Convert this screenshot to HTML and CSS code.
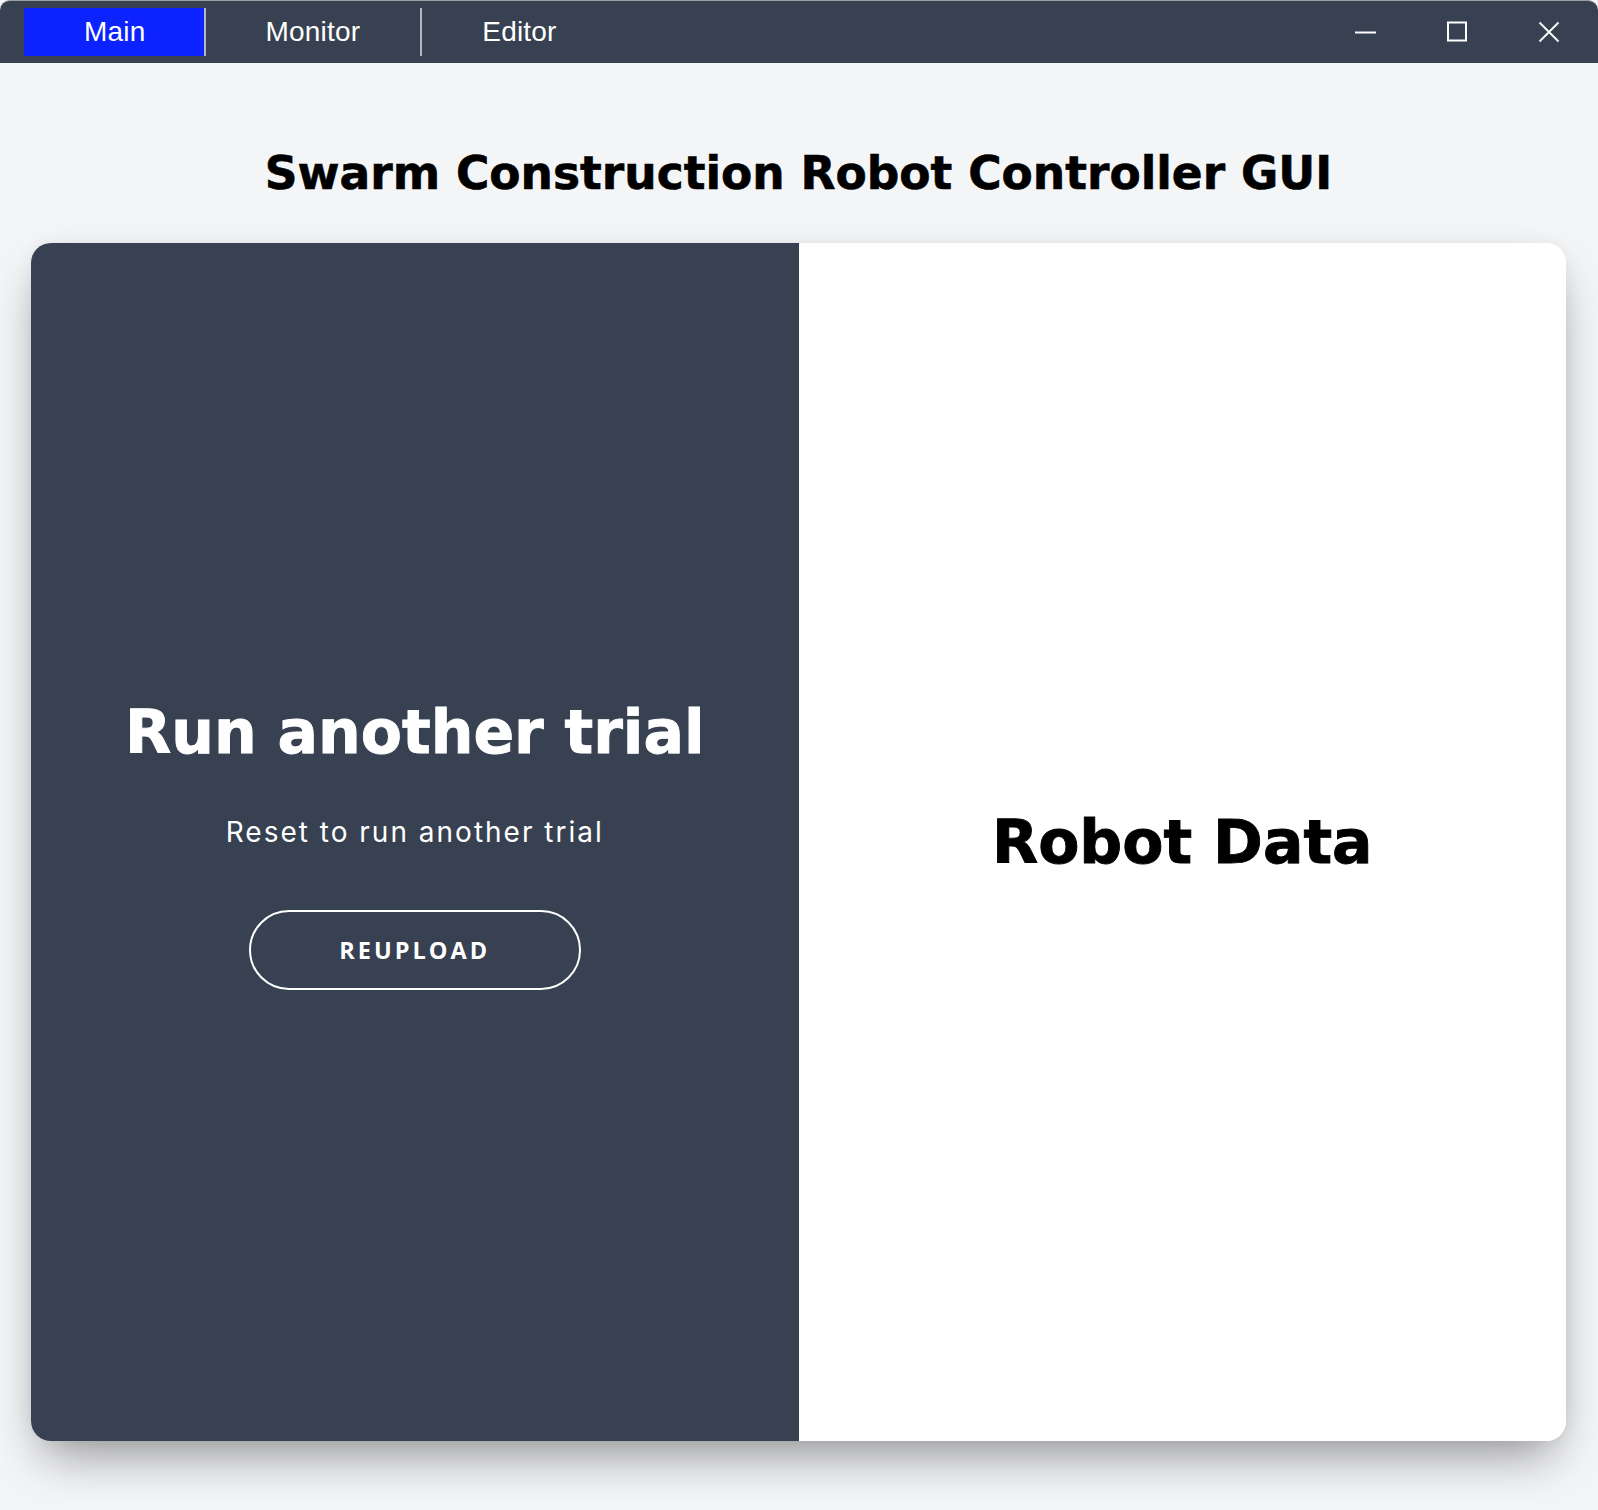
FILE: index.html
```html
<!DOCTYPE html>
<html lang="en">
<head>
<meta charset="utf-8">
<title>Swarm Construction Robot Controller GUI</title>
<link rel="stylesheet" href="styles.css">
</head>
<body>
<div class="window">
  <header class="titlebar">
    <nav class="tabs">
      <div class="tab tab-active">Main</div>
      <div class="tab tab-divided">Monitor</div>
      <div class="tab">Editor</div>
    </nav>
    <div class="controls">
      <div class="control">
        <svg width="22" height="22" viewBox="0 0 22 22"><path d="M1 11.5H22" stroke="#fff" stroke-width="2" fill="none"/></svg>
      </div>
      <div class="control">
        <svg width="22" height="22" viewBox="0 0 22 22"><rect x="2" y="1.5" width="18" height="18" stroke="#fff" stroke-width="2" fill="none"/></svg>
      </div>
      <div class="control">
        <svg width="22" height="22" viewBox="0 0 22 22"><path d="M1.5 1.5L20.5 20.5M20.5 1.5L1.5 20.5" stroke="#fff" stroke-width="1.8" fill="none"/></svg>
      </div>
    </div>
  </header>
  <main class="content">
    <h1 class="page-title">Swarm Construction Robot Controller GUI</h1>
    <section class="card">
      <div class="panel panel-dark">
        <h2 class="panel-heading">Run another trial</h2>
        <p class="panel-sub">Reset to run another trial</p>
        <button class="outline-btn">REUPLOAD</button>
      </div>
      <div class="panel panel-light">
        <h2 class="panel-heading panel-heading-dark">Robot Data</h2>
      </div>
    </section>
  </main>
</div>
</body>
</html>
```

FILE: styles.css
```css
* { box-sizing: border-box; }
html, body {
  margin: 0;
  padding: 0;
  background: #f4f5f7;
}
body {
  width: 1598px;
  height: 1510px;
  overflow: hidden;
  font-family: "Inter", "Liberation Sans", sans-serif;
}
.window {
  display: flex;
  flex-direction: column;
  height: 100%;
}
.titlebar {
  height: 63px;
  background: #374151;
  border-top: 1px solid #9a9ea5;
  border-radius: 10px 10px 0 0;
  display: flex;
  justify-content: space-between;
  align-items: stretch;
  flex-shrink: 0;
}
.tabs {
  display: flex;
  align-items: center;
  padding-left: 24px;
}
.tab {
  height: 48px;
  display: flex;
  align-items: center;
  padding: 0 60px;
  font-family: "Liberation Sans", Arial, sans-serif;
  font-size: 28px;
  color: #ffffff;
  letter-spacing: 0.2px;
}
.tab-active {
  background: #0c22ff;
  border-right: 2px solid #b4b7bc;
  padding: 0 58px 0 60px;
}
.tab-divided {
  border-right: 2px solid #b4b7bc;
}
.controls {
  display: flex;
  padding-right: 3px;
}
.control {
  width: 92px;
  display: flex;
  align-items: center;
  justify-content: center;
  padding-bottom: 1px;
}
.content {
  flex: 1;
  display: flex;
  flex-direction: column;
  padding: 82px 32px 0 31px;
}
.page-title {
  margin: 0 0 40px;
  text-align: center;
  font-family: "DejaVu Sans", "Inter", sans-serif;
  font-size: 45.5px;
  line-height: 58px;
  font-weight: 700;
  color: #000;
  -webkit-text-stroke: 0.6px #000;
}
.card {
  height: 1198px;
  display: grid;
  grid-template-columns: 1fr 1fr;
  border-radius: 20px;
  overflow: hidden;
  box-shadow: 0 25px 50px -12px rgba(0, 0, 0, 0.4), 0 0 18px rgba(0, 0, 0, 0.05);
  background: #fff;
}
.panel {
  display: flex;
  flex-direction: column;
  align-items: center;
  justify-content: center;
}
.panel-dark {
  background: #374151;
  color: #fff;
}
.panel-light {
  background: #ffffff;
}
.panel-heading {
  margin: 0;
  font-family: "DejaVu Sans", "Inter", sans-serif;
  font-size: 60px;
  line-height: 76px;
  font-weight: 700;
  -webkit-text-stroke: 0.9px currentColor;
}
.panel-heading-dark {
  color: #000;
}
.panel-sub {
  margin: 45px 0 61px;
  font-size: 28px;
  font-weight: 400;
  letter-spacing: 2px;
}
.outline-btn {
  width: 332px;
  height: 80px;
  border: 2px solid #ffffff;
  border-radius: 40px;
  background: transparent;
  color: #fff;
  font-family: "Open Sans", "Noto Sans", sans-serif;
  font-weight: 700;
  font-size: 23.5px;
  letter-spacing: 3px;
  padding: 0;
}
```
